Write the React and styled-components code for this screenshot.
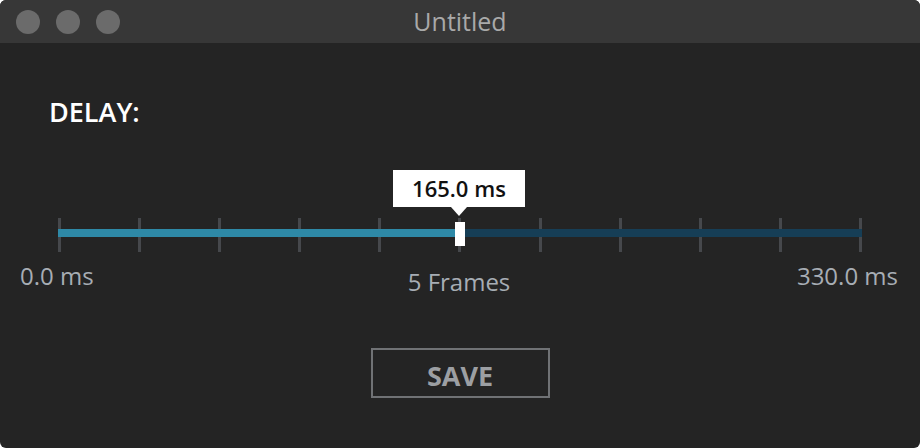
import React from 'react';
import styled, { createGlobalStyle } from 'styled-components';

const GlobalStyle = createGlobalStyle`
    html, body {
        margin: 0;
        padding: 0;
        background: #fff;
    }
    body {
        font-family: "Open Sans", "Noto Sans", sans-serif;
    }
`;

const TICKS = 11;

const App = () => {
    const value = 165;
    const max = 330;
    const pct = (value / max) * 100;

    return (
        <>
            <GlobalStyle />
            <Window>
                <TitleBar>
                    <Lights>
                        <Light />
                        <Light />
                        <Light />
                    </Lights>
                    <Title>Untitled</Title>
                </TitleBar>
                <Content>
                    <Heading>DELAY:</Heading>
                    <Slider>
                        <Ticks>
                            {Array.from({ length: TICKS }).map((_, i) => (
                                <Tick key={i} />
                            ))}
                        </Ticks>
                        <Track>
                            <Fill style={{ width: `${pct}%` }} />
                        </Track>
                        <Thumb style={{ left: `${pct}%` }} />
                        <Tooltip style={{ left: `${pct}%` }}>165.0 ms</Tooltip>
                    </Slider>
                    <Labels>
                        <Label>0.0 ms</Label>
                        <Label $center>5 Frames</Label>
                        <Label $right>330.0 ms</Label>
                    </Labels>
                    <SaveButton>SAVE</SaveButton>
                </Content>
            </Window>
        </>
    );
};

export default App;

const Window = styled.div`
    width: 920px;
    height: 448px;
    border-radius: 6px;
    overflow: hidden;
    background: #242424;
    display: flex;
    flex-direction: column;
`

const TitleBar = styled.div`
    position: relative;
    height: 43px;
    background: #373737;
    display: flex;
    align-items: center;
    justify-content: center;
`

const Lights = styled.div`
    position: absolute;
    left: 16px;
    top: 10px;
    display: flex;
    gap: 16px;
`

const Light = styled.span`
    width: 24px;
    height: 24px;
    border-radius: 50%;
    background: #6b6b6b;
`

const Title = styled.div`
    font-size: 25px;
    line-height: 43px;
    color: #a9a9a9;
`

const Content = styled.div`
    flex: 1;
    display: flex;
    flex-direction: column;
`

const Heading = styled.h1`
    margin: 54px 0 0 49px;
    font-size: 27px;
    font-weight: 600;
    line-height: 30px;
    color: #fff;
`

const Slider = styled.div`
    position: relative;
    margin: 91px 58px 0 58px;
    height: 34px;
`

const Ticks = styled.div`
    height: 100%;
    display: flex;
    justify-content: space-between;
`

const Tick = styled.span`
    width: 3px;
    background: #46484c;
`

const Track = styled.div`
    position: absolute;
    left: 0;
    right: 0;
    top: 11px;
    height: 8px;
    background: #163e56;
`

const Fill = styled.div`
    height: 100%;
    background: #2e89a7;
`

const Thumb = styled.span`
    position: absolute;
    top: 4px;
    width: 10px;
    height: 24px;
    margin-left: -5px;
    background: #fff;
`

const Tooltip = styled.div`
    position: absolute;
    top: -48px;
    width: 132px;
    height: 37px;
    margin-left: -67px;
    background: #fff;
    color: #111;
    font-size: 22px;
    font-weight: 600;
    line-height: 37px;
    text-align: center;

    &::after {
        content: '';
        position: absolute;
        left: 50%;
        top: 100%;
        margin-left: -8px;
        border-left: 8px solid transparent;
        border-right: 8px solid transparent;
        border-top: 9px solid #fff;
    }
`

const Labels = styled.div`
    margin-top: 9px;
    padding: 0 22px 0 20px;
    display: grid;
    grid-template-columns: 1fr auto 1fr;
    align-items: start;
`

const Label = styled.div`
    font-size: 24px;
    line-height: 30px;
    color: #a7adb4;
    padding-top: ${p => (p.$center ? '6px' : '0')};
    text-align: ${p => (p.$right ? 'right' : 'left')};
`

const SaveButton = styled.button`
    align-self: center;
    margin: 51px 0 0 0;
    width: 179px;
    height: 50px;
    padding: 5px 0 0 0;
    border: 2px solid #707275;
    background: transparent;
    color: #9c9fa3;
    font-family: "Open Sans", "Noto Sans", sans-serif;
    font-size: 27px;
    font-weight: 700;
    line-height: 40px;
`
